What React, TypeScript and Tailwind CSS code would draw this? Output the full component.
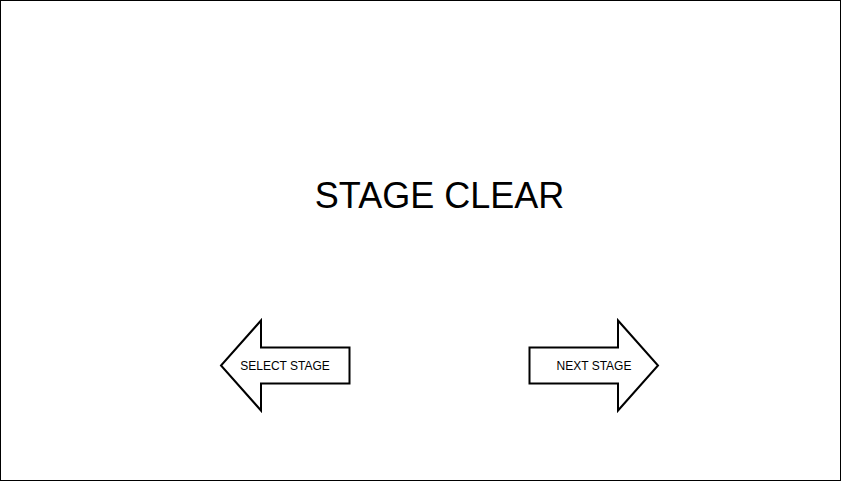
type ArrowButtonProps = {
  label: string;
  direction: "left" | "right";
};

const outlines = {
  left: "M130.5 27.5V63.5H42V90.5L2 45.5L42 0.5V27.5Z",
  right: "M1.5 27.5V63.5H90V90.5L130 45.5L90 0.5V27.5Z",
};

function ArrowButton({ label, direction }: ArrowButtonProps) {
  return (
    <button
      type="button"
      className="relative flex h-[92px] w-[132px] cursor-pointer items-center justify-center text-xs text-black"
    >
      <svg
        className="absolute inset-0 overflow-visible"
        width="132"
        height="92"
        viewBox="0 0 132 92"
        fill="white"
        stroke="black"
        strokeWidth="2"
        strokeMiterlimit="10"
        aria-hidden="true"
      >
        <path d={outlines[direction]} />
      </svg>
      <span className="relative">{label}</span>
    </button>
  );
}

export default function App() {
  return (
    <main className="flex min-h-[481px] flex-col items-center border border-black bg-white pt-[175px] pl-[38px] font-['Liberation_Sans',Arial,sans-serif] text-black">
      <h1 className="text-4xl">STAGE CLEAR</h1>
      <nav aria-label="Stage navigation" className="mt-[104px] flex gap-[177px]">
        <ArrowButton label="SELECT STAGE" direction="left" />
        <ArrowButton label="NEXT STAGE" direction="right" />
      </nav>
    </main>
  );
}
